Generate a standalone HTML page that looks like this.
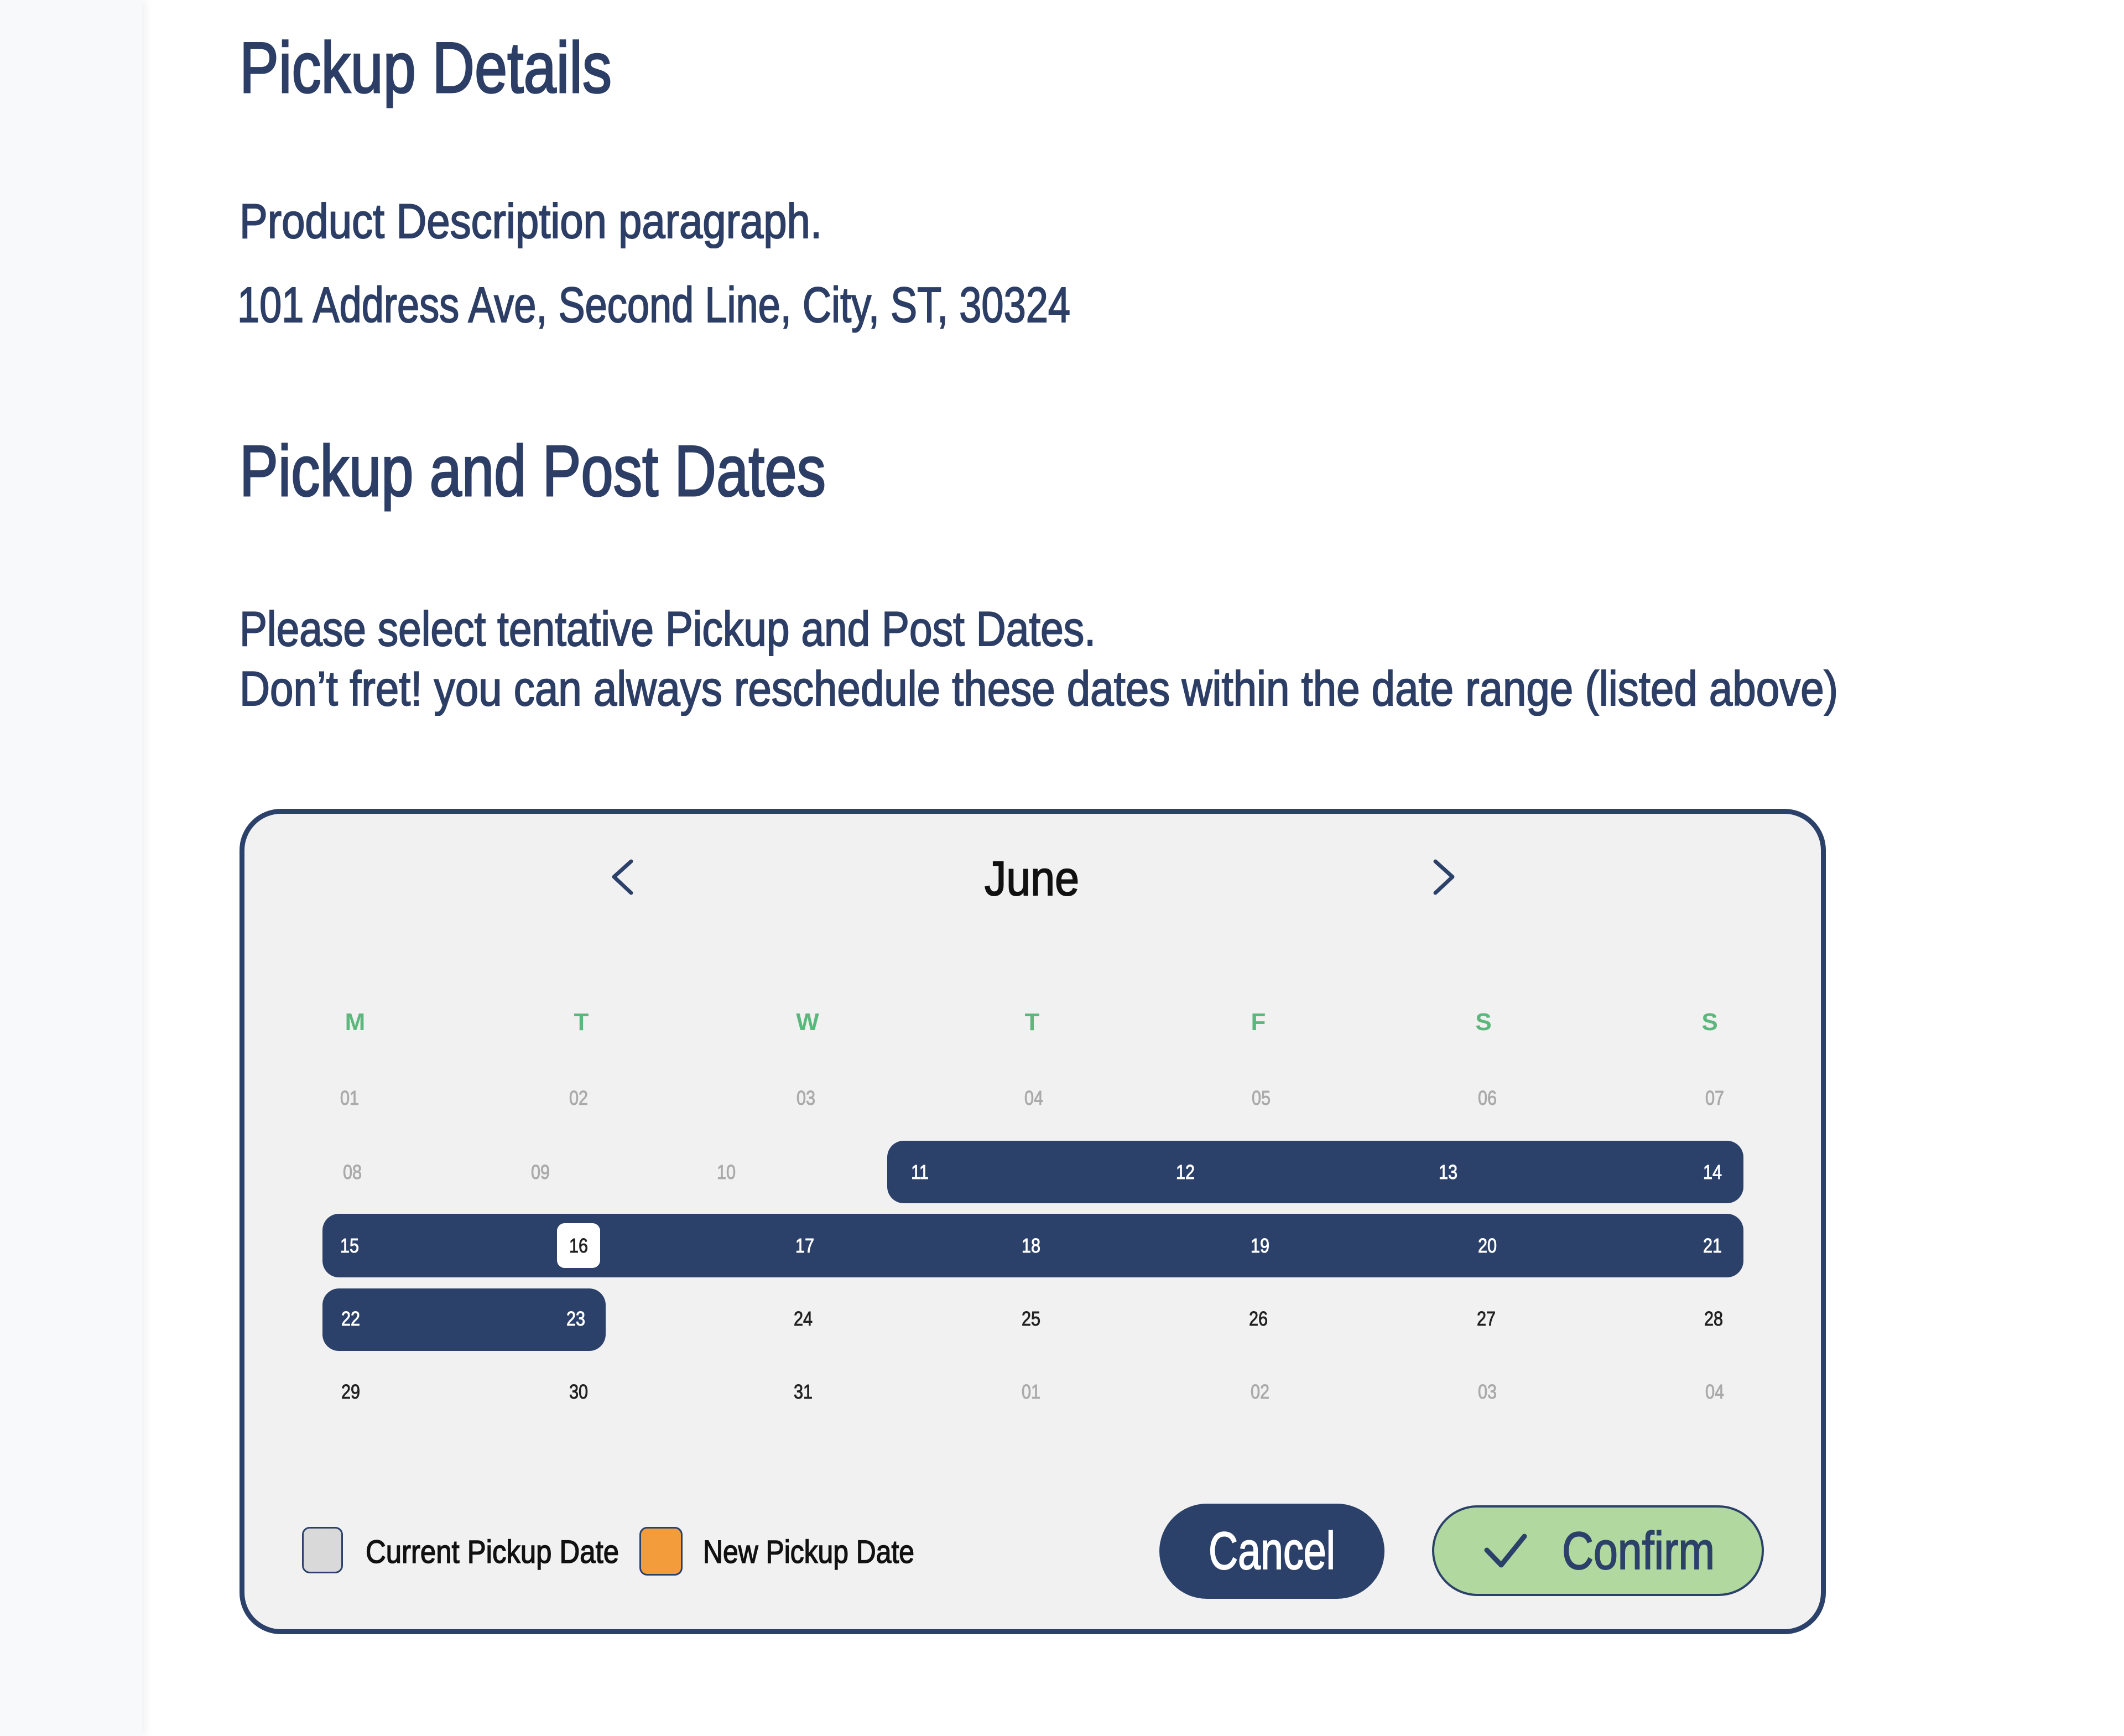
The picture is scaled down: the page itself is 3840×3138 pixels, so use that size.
<!DOCTYPE html>
<html><head><meta charset="utf-8">
<style>
html,body{margin:0;padding:0;}
body{width:3840px;height:3138px;background:#fff;position:relative;overflow:hidden;font-family:"Liberation Sans",sans-serif;color:#2c3e66;}
.side{position:absolute;left:0;top:0;width:257px;height:3138px;background:#f8f9fb;box-shadow:6px 0 14px rgba(0,0,0,0.06);}
.t{position:absolute;white-space:nowrap;line-height:1;display:inline-block;transform-origin:0 0;-webkit-text-stroke:2px currentColor;}
.big{-webkit-text-stroke:3px currentColor;}
.cal{position:absolute;left:433px;top:1462px;width:2850px;height:1474px;border:9px solid #2c4169;border-radius:75px;background:#f1f1f1;}
.bar{position:absolute;background:#2c4169;border-radius:30px;}
.d{position:absolute;width:120px;text-align:center;font-size:36px;line-height:1;-webkit-text-stroke:1px currentColor;}
.h{position:absolute;width:120px;text-align:center;font-size:44px;font-weight:bold;color:#5bb77b;line-height:1;}
.g{color:#aaa}.k{color:#222}.w{color:#fff}
</style></head><body>
<div class="side"></div>

<div class="t big" style="left:433px;top:57px;font-size:130px;--w:673">Pickup Details</div>
<div class="t" style="left:433px;top:356px;font-size:88px;--w:1053">Product Description paragraph.</div>
<div class="t" style="left:429px;top:507px;font-size:90px;--w:1506">101 Address Ave, Second Line, City, ST, 30324</div>
<div class="t big" style="left:433px;top:786px;font-size:130px;--w:1060">Pickup and Post Dates</div>
<div class="t" style="left:433px;top:1093px;font-size:88px;--w:1548">Please select tentative Pickup and Post Dates.</div>
<div class="t" style="left:433px;top:1201px;font-size:88px;--w:2890">Don’t fret! you can always reschedule these dates within the date range (listed above)</div>

<div class="cal"></div>
<svg style="position:absolute;left:0;top:0" width="3840" height="3138">
<polyline points="1141,1557 1110,1585 1141,1614" fill="none" stroke="#2c4169" stroke-width="7" stroke-linecap="round" stroke-linejoin="round"/>
<polyline points="2595,1557 2626,1585 2595,1614" fill="none" stroke="#2c4169" stroke-width="7" stroke-linecap="round" stroke-linejoin="round"/>
</svg>
<div class="t" style="left:1780px;top:1544px;font-size:88px;color:#111;--w:171">June</div>

<div class="h" style="left:582px;top:1826px">M</div>
<div class="h" style="left:991px;top:1826px">T</div>
<div class="h" style="left:1400px;top:1826px">W</div>
<div class="h" style="left:1806px;top:1826px">T</div>
<div class="h" style="left:2215px;top:1826px">F</div>
<div class="h" style="left:2622px;top:1826px">S</div>
<div class="h" style="left:3031px;top:1826px">S</div>

<div class="bar" style="left:1604px;top:2062px;width:1548px;height:113px"></div>
<div class="bar" style="left:583px;top:2194px;width:2569px;height:115px"></div>
<div class="bar" style="left:583px;top:2329px;width:512px;height:113px"></div>
<div style="position:absolute;left:1007px;top:2211px;width:78px;height:81px;background:#fff;border-radius:14px"></div>

<div id="dates"></div>

<div style="position:absolute;left:546px;top:2760px;width:74px;height:84px;background:#d9d9d9;border:3px solid #2c4169;border-radius:14px;box-sizing:border-box"></div>
<div class="t" style="left:661px;top:2777px;font-size:58px;color:#111;--w:458;-webkit-text-stroke:1.5px #111">Current Pickup Date</div>
<div style="position:absolute;left:1156px;top:2760px;width:78px;height:88px;background:#f39c3c;border:3px solid #2c4169;border-radius:14px;box-sizing:border-box"></div>
<div class="t" style="left:1271px;top:2777px;font-size:58px;color:#111;--w:382;-webkit-text-stroke:1.5px #111">New Pickup Date</div>

<div style="position:absolute;left:2096px;top:2718px;width:407px;height:172px;background:#2c4169;border-radius:86px"></div>
<div class="t" style="left:2185px;top:2756px;font-size:96px;color:#fff;--w:229">Cancel</div>
<div style="position:absolute;left:2589px;top:2721px;width:600px;height:164px;background:#b0d89f;border:4px solid #2c4169;border-radius:82px;box-sizing:border-box"></div>
<svg style="position:absolute;left:0;top:0" width="3840" height="3138"><polyline points="2688,2802 2714,2829 2756,2777" fill="none" stroke="#2c4169" stroke-width="9" stroke-linecap="round" stroke-linejoin="round"/></svg>
<div class="t" style="left:2824px;top:2756px;font-size:96px;color:#2c4169;--w:276">Confirm</div>

<script>
var rows=[
 [1984,[[632,'01','g'],[1046,'02','g'],[1457,'03','g'],[1869,'04','g'],[2280,'05','g'],[2689,'06','g'],[3100,'07','g']]],
 [2118,[[637,'08','g'],[977,'09','g'],[1313,'10','g'],[1663,'11','w'],[2143,'12','w'],[2618,'13','w'],[3096,'14','w']]],
 [2251,[[632,'15','w'],[1046,'16','k'],[1455,'17','w'],[1864,'18','w'],[2278,'19','w'],[2689,'20','w'],[3096,'21','w']]],
 [2383,[[634,'22','w'],[1041,'23','w'],[1452,'24','k'],[1864,'25','k'],[2275,'26','k'],[2687,'27','k'],[3098,'28','k']]],
 [2515,[[634,'29','k'],[1046,'30','k'],[1452,'31','k'],[1864,'01','g'],[2278,'02','g'],[2689,'03','g'],[3100,'04','g']]]
];
var h='';
rows.forEach(function(r){r[1].forEach(function(c){
 h+='<div class="d '+c[2]+'" style="left:'+(c[0]-60)+'px;top:'+(r[0]-17)+'px;transform:scaleX(0.85)">'+c[1]+'</div>';
});});
document.getElementById('dates').innerHTML=h;
document.querySelectorAll('.t').forEach(function(e){
 var w=parseFloat(getComputedStyle(e).getPropertyValue('--w'));
 if(w){var a=e.getBoundingClientRect().width; if(a>0) e.style.transform='scaleX('+(w/a)+')';}
});
</script>
</body></html>
